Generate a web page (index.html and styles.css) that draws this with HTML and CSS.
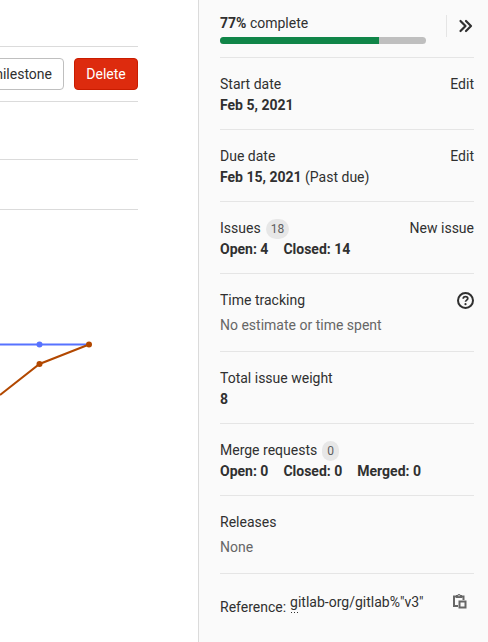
FILE: index.html
```html
<!DOCTYPE html>
<html lang="en">
<head>
<meta charset="utf-8">
<title>Milestone</title>
<link rel="stylesheet" href="styles.css">
</head>
<body>
<div class="layout">
  <main class="content">
    <div class="topbar"></div>
    <div class="actions">
      <button class="btn" type="button">milestone</button>
      <button class="btn btn-danger" type="button">Delete</button>
    </div>
    <div class="title-row"></div>
    <div class="tabs-row"></div>
    <svg class="chart" width="138" height="240" viewBox="0 0 138 240" aria-hidden="true">
      <path d="M0 134.500H89" fill="none" stroke="#5772ff" stroke-width="2"/>
      <circle cx="39.500" cy="134.500" r="3" fill="#5772ff"/>
      <path d="M0 185L39.500 154L89 134.500" fill="none" stroke="#b24800" stroke-width="2"/>
      <circle cx="39.500" cy="154" r="3" fill="#b24800"/>
      <circle cx="89" cy="134.500" r="3" fill="#b24800"/>
    </svg>
  </main>
  <aside class="sidebar">
    <section class="summary">
      <div class="completion">
        <div><strong>77%</strong> complete</div>
        <div class="progress"><div class="progress-bar" style="width:77%"></div></div>
      </div>
      <button class="toggle" type="button" aria-label="Collapse sidebar">
        <svg width="16" height="16" viewBox="0 0 16 16" fill="none" stroke="currentColor" stroke-width="2.200" stroke-linecap="round" stroke-linejoin="round"><path d="M2.500 3l5 5-5 5M8 3l5 5-5 5"/></svg>
      </button>
    </section>
    <section class="block">
      <div class="head"><span>Start date</span><a class="link" href="#">Edit</a></div>
      <div class="value"><strong>Feb 5, 2021</strong></div>
    </section>
    <section class="block">
      <div class="head"><span>Due date</span><a class="link" href="#">Edit</a></div>
      <div class="value"><strong>Feb 15, 2021</strong> (Past due)</div>
    </section>
    <section class="block">
      <div class="head"><span class="label">Issues <span class="badge">18</span></span><a class="link" href="#">New issue</a></div>
      <div class="value counts"><strong>Open: 4</strong><strong>Closed: 14</strong></div>
    </section>
    <section class="block">
      <div class="head"><span>Time tracking</span>
        <button class="icon-btn" type="button" aria-label="Help">
          <svg width="17" height="17" viewBox="0 0 17 17" fill="none" stroke="currentColor"><circle cx="8.500" cy="8.500" r="7.500" stroke-width="2"/><path d="M6.200 6.700C6.200 5.400 7.200 4.600 8.500 4.600s2.300.8 2.300 2c0 1.500-2.300 1.600-2.300 3.200" stroke-width="1.700"/><circle cx="8.500" cy="12.200" r="1.100" fill="currentColor" stroke="none"/></svg>
        </button>
      </div>
      <div class="value muted">No estimate or time spent</div>
    </section>
    <section class="block">
      <div class="head"><span>Total issue weight</span></div>
      <div class="value"><strong>8</strong></div>
    </section>
    <section class="block">
      <div class="head"><span class="label">Merge requests <span class="badge">0</span></span></div>
      <div class="value counts"><strong>Open: 0</strong><strong>Closed: 0</strong><strong>Merged: 0</strong></div>
    </section>
    <section class="block">
      <div class="head"><span>Releases</span></div>
      <div class="value muted">None</div>
    </section>
    <section class="reference">
      <span class="ref-label">Reference:</span>
      <span class="ref-value">gitlab-org/gitlab%"v3"</span>
      <button class="icon-btn copy" type="button" aria-label="Copy reference">
        <svg width="16" height="16" viewBox="0 0 16 16" fill="currentColor"><path fill-rule="evenodd" d="M4 2h1.500a1.600 1.600 0 0 1 3 0H10v3H4zM6.500 2v1.200h1V2z"/><path d="M1 2.500h3v2H3V12h3v2H1zM10 2.500h2.500V7h-2V4.500H10z"/><path fill-rule="evenodd" d="M6.500 7.500h8v8h-8zm2 2v4h4v-4z"/></svg>
      </button>
    </section>
  </aside>
</div>
</body>
</html>
```
FILE: styles.css
```css
* { box-sizing: border-box; }

body {
  margin: 0;
  font: 14px/21px Roboto, "Noto Sans", sans-serif;
  color: #303030;
  background: #fff;
}

button {
  font: inherit;
  color: inherit;
}

.layout {
  display: grid;
  grid-template-columns: minmax(0, 1fr) 290px;
  min-height: 100vh;
}

.content {
  padding-right: 60px;
  overflow: hidden;
}

.topbar,
.actions,
.title-row,
.tabs-row { border-bottom: 1px solid #dbdbdb; }

.topbar { height: 47px; }
.title-row { height: 58px; }
.tabs-row { height: 50px; }

.actions {
  display: flex;
  justify-content: flex-end;
  gap: 10px;
  padding: 11px 0;
}

.btn {
  flex: none;
  min-width: 64px;
  height: 32px;
  padding: 0 11px;
  border: 1px solid #bfbfbf;
  border-radius: 4px;
  background: #fff;
}

.btn-danger {
  border-color: #c91c00;
  background: #dd2b0e;
  color: #fff;
}

.chart {
  display: block;
  margin-left: auto;
}

.sidebar {
  padding: 0 14px 0 21px;
  border-left: 1px solid #dbdbdb;
  background: #fafafa;
}

.summary {
  display: flex;
  gap: 20px;
  padding: 13px 0;
  border-bottom: 1px solid #e5e5e5;
}

.completion { flex: 1; }

.progress {
  height: 7px;
  margin-top: 3px;
  border-radius: 4px;
  background: #bfbfbf;
  overflow: hidden;
}

.progress-bar {
  height: 100%;
  background: #108548;
}

.toggle {
  display: flex;
  align-items: center;
  width: 28px;
  height: 22px;
  margin-top: 2px;
  padding: 0 0 0 11px;
  border: 0;
  border-left: 1px solid #e5e5e5;
  background: none;
}

.toggle svg { flex: none; }

.block {
  padding: 16px 0 13px;
  border-bottom: 1px solid #e5e5e5;
}

.head {
  display: flex;
  justify-content: space-between;
  align-items: center;
  height: 21px;
}

.label {
  display: flex;
  align-items: center;
  gap: 5px;
}

.link {
  color: inherit;
  text-decoration: none;
}

.badge {
  padding: 0 5px;
  border-radius: 10px;
  background: #e7e7e7;
  color: #5e5e5e;
  font-size: 12px;
  line-height: 20px;
}

.counts {
  display: flex;
  gap: 15px;
}

.muted {
  margin: 4px 0 2px;
  color: #666;
}

.icon-btn {
  display: flex;
  padding: 0;
  border: 0;
  background: none;
}

.reference {
  display: flex;
  align-items: flex-start;
  gap: 4px;
  padding-top: 18px;
}

.ref-label { margin-top: 5px; }

/* Three small dots under the start of the reference path */
.ref-value {
  background: linear-gradient(90deg, #303030 1px, transparent 1px) 1px 100% / 3px 1px no-repeat,
    linear-gradient(90deg, #303030 1px, transparent 1px) 4px 100% / 3px 1px no-repeat,
    linear-gradient(90deg, #303030 1px, transparent 1px) 7px 100% / 3px 1px no-repeat;
}

.copy {
  margin: 1px 6px 0 auto;
  color: #666;
}
```
